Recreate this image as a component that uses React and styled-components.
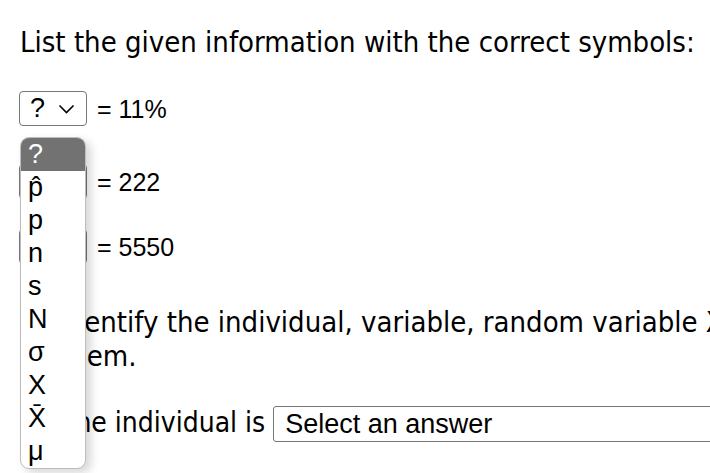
import React from 'react';
import styled, { createGlobalStyle } from 'styled-components';

const GlobalStyle = createGlobalStyle`
  html {
    overflow: hidden;
  }
  html, body {
    margin: 0;
    padding: 0;
    background: #ffffff;
  }
  body {
    min-height: 100vh;
    font-family: "DejaVu Sans", Tahoma, sans-serif;
    font-stretch: condensed;
    color: #000000;
  }
`;

const Page = styled.div`
  position: relative;
  width: 1000px;
  padding: 25px 0 0 20px;
`;

const Prompt = styled.p`
  margin: 0;
  font-size: 29px;
  line-height: 34px;
  white-space: nowrap;
`;

const Question = styled.div`
  margin-top: 41px;
  padding-left: 40px;
`;

const Row = styled.div`
  display: flex;
  align-items: center;
  gap: 10px;
  margin-top: ${p => p.$top}px;
`;

const SymbolSelect = styled.div`
  box-sizing: border-box;
  width: 68px;
  height: 35px;
  margin-left: -1px;
  border: 1px solid #767676;
  border-radius: 4px;
  display: flex;
  align-items: center;
  justify-content: space-between;
  padding: 0 11px 0 10px;
  font-family: "Liberation Sans", Arial, sans-serif;
  font-stretch: normal;
  font-size: 27px;
`;

const Chevron = styled.svg`
  width: 17px;
  height: 10px;
`;

const Value = styled.span`
  font-family: "Liberation Sans", Arial, sans-serif;
  font-stretch: normal;
  font-size: 25px;
  line-height: 34px;
`;

const AnswerLine = styled.p`
  margin: 32px 0 0;
  font-size: 28px;
  line-height: 36px;
  white-space: nowrap;
`;

const AnswerSelect = styled.span`
  display: inline-flex;
  align-items: center;
  box-sizing: border-box;
  vertical-align: middle;
  width: 520px;
  height: 36px;
  margin-left: 8px;
  padding-left: 11px;
  border: 1px solid #767676;
  border-radius: 3px;
  font-family: "Liberation Sans", Arial, sans-serif;
  font-stretch: normal;
  font-size: 27px;
`;

const OptionList = styled.ul`
  position: absolute;
  left: 20px;
  top: 137px;
  width: 66px;
  box-sizing: border-box;
  margin: 0;
  padding: 0;
  list-style: none;
  background: #ffffff;
  border: 1px solid #bdbdbd;
  border-radius: 9px;
  overflow: hidden;
  box-shadow: 5px 4px 10px rgba(0, 0, 0, 0.16);
  font-family: "Liberation Sans", Arial, sans-serif;
  font-stretch: normal;
  font-size: 27px;
`;

const Option = styled.li`
  height: 33px;
  line-height: 33px;
  padding-left: 7px;
  background: ${p => (p.$active ? '#727272' : 'transparent')};
  color: ${p => (p.$active ? '#ffffff' : '#000000')};
`;

const symbols = ['?', 'p̂', 'p', 'n', 's', 'N', 'σ', 'X', 'X̄', 'μ'];

const givens = [
  { value: '= 11%', top: 32 },
  { value: '= 222', top: 38 },
  { value: '= 5550', top: 30 }
];

const App = () => {
  return (
    <Page>
      <GlobalStyle />
      <Prompt>List the given information with the correct symbols:</Prompt>

      {givens.map((g, i) => (
        <Row key={i} $top={g.top}>
          <SymbolSelect>
            <span>?</span>
            <Chevron viewBox="0 0 17 10">
              <path d="M1.5 1.5 L8.5 8.5 L15.5 1.5" fill="none" stroke="#000" strokeWidth="1.6" />
            </Chevron>
          </SymbolSelect>
          <Value>{g.value}</Value>
        </Row>
      ))}

      <Question>
        <Prompt>
          Identify the individual, variable, random variable X, and the parameter for each of
          <br />
          them.
        </Prompt>
        <AnswerLine>
          The individual is
          <AnswerSelect>Select an answer</AnswerSelect>
        </AnswerLine>
      </Question>

      <OptionList>
        {symbols.map((s, i) => (
          <Option key={s} $active={i === 0}>{s}</Option>
        ))}
      </OptionList>
    </Page>
  );
};

export default App;
